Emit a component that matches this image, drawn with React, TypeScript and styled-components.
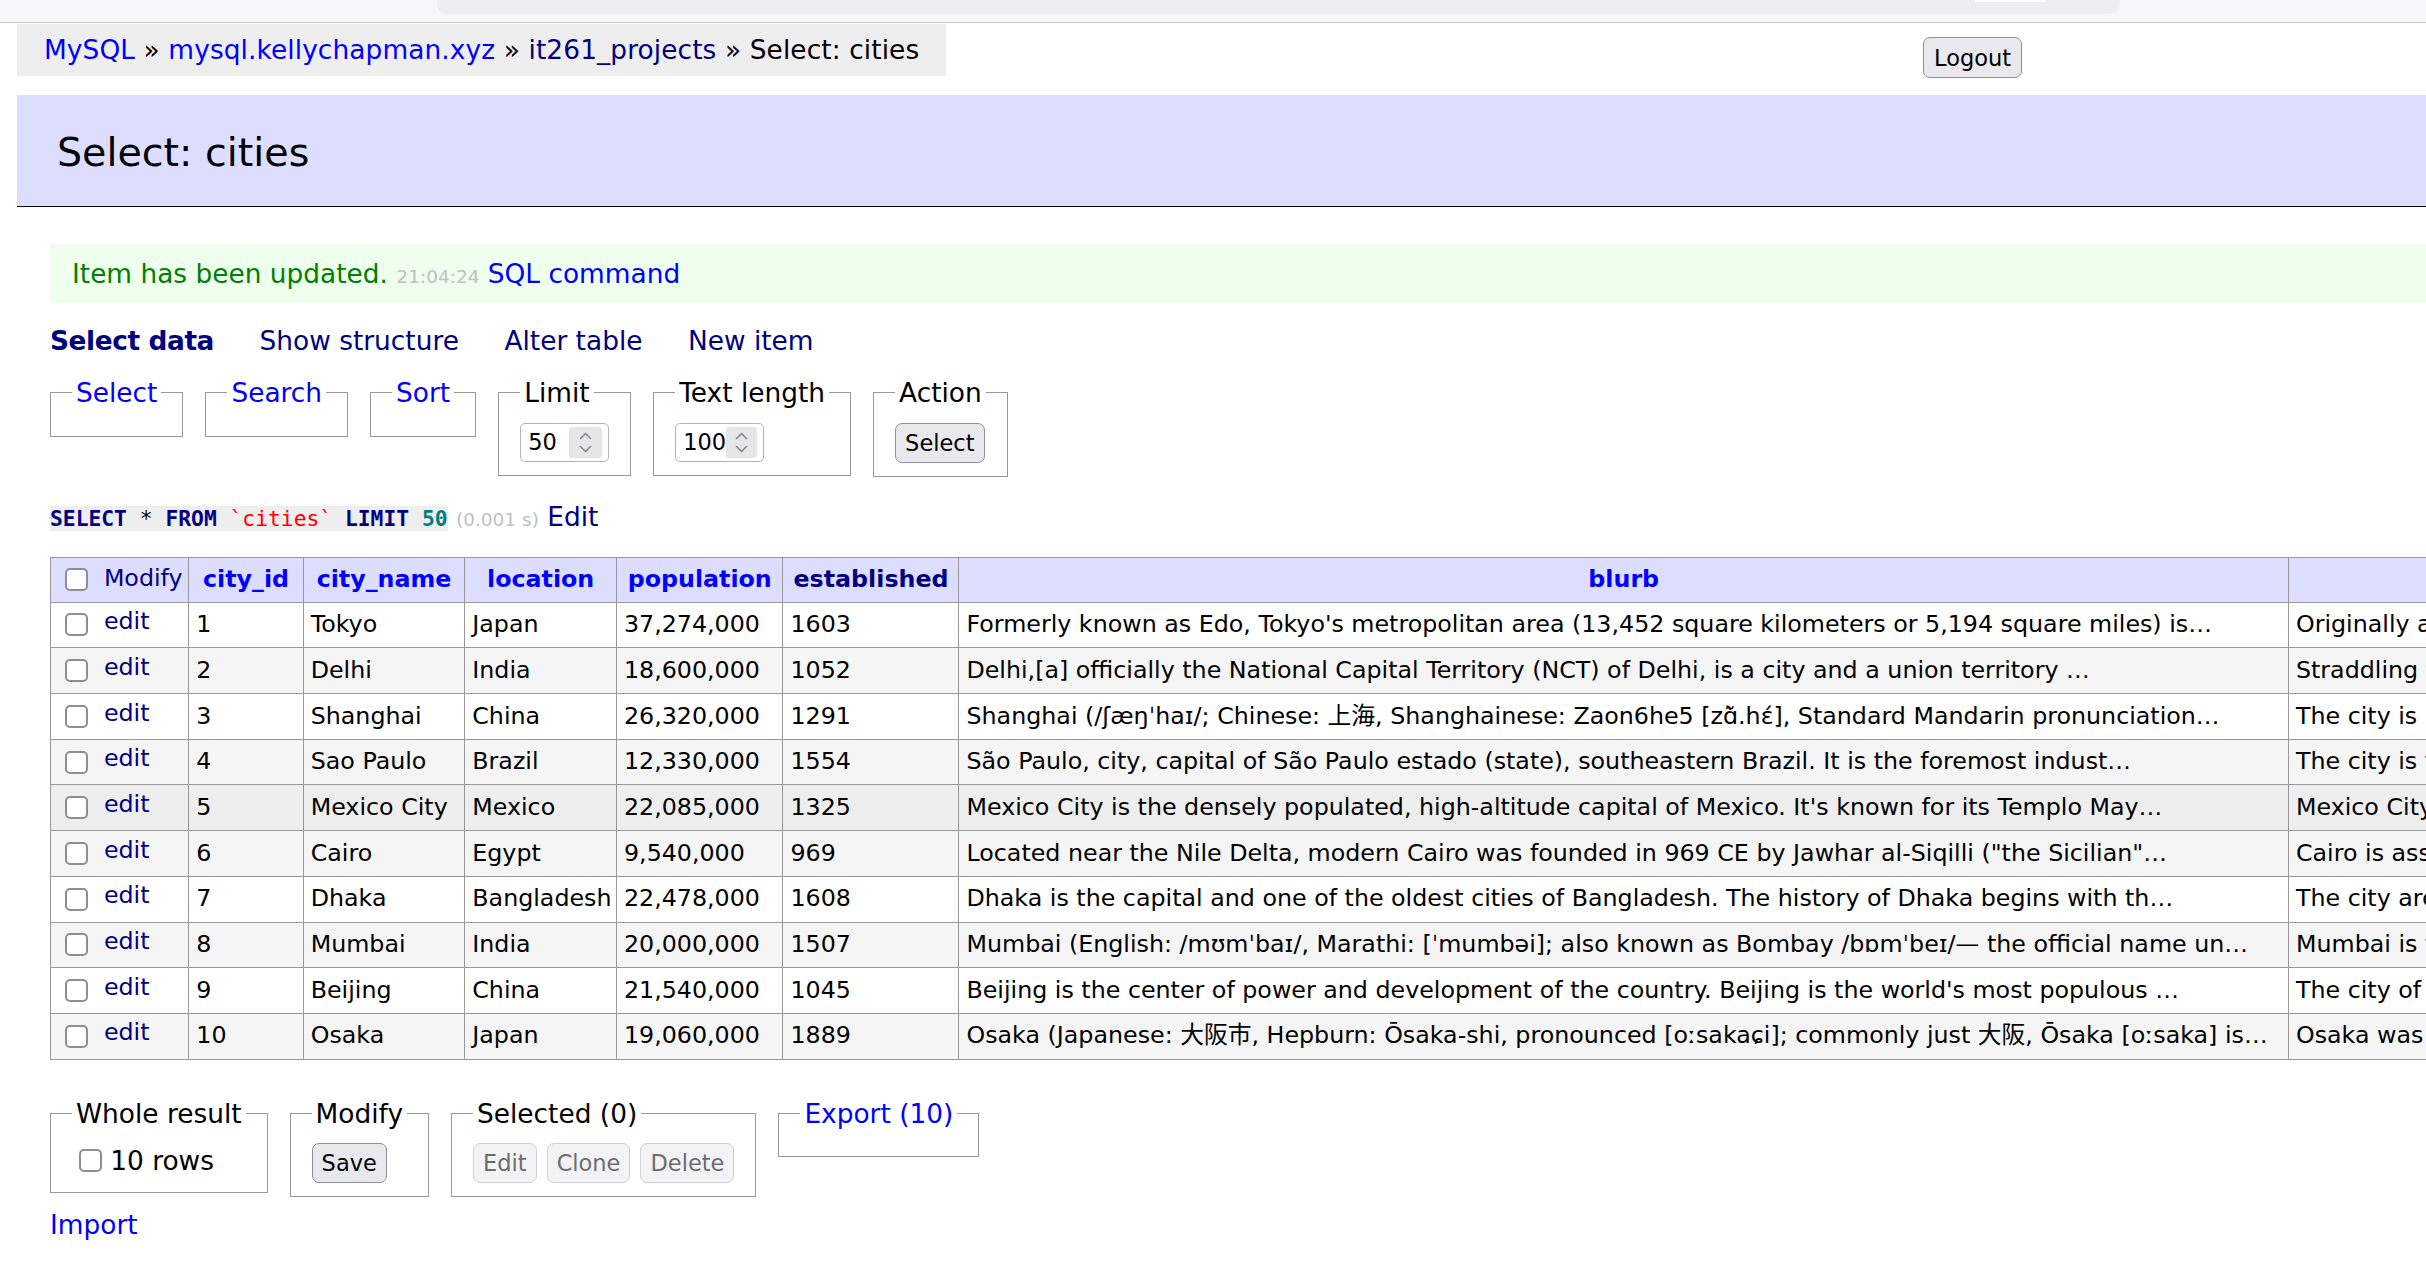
import React from "react";
import styled, { createGlobalStyle } from "styled-components";

const BLUE = "#0000ff";
const NAVY = "#000080";
const FONT = `"DejaVu Sans", Verdana, "Noto Sans CJK JP", sans-serif`;

const GlobalStyle = createGlobalStyle`
  html, body { margin: 0; padding: 0; overflow: hidden; background: #fff; }
  body {
    font-family: ${FONT};
    font-size: 26.4px;
    line-height: 1.25;
    color: #000;
  }
  #root { width: max-content; }
`;

const Page = styled.div`
  position: relative;
  width: max-content;
  padding-bottom: 40px;
`;

const TopChrome = styled.div`
  height: 22px;
  background: #f7f7f9;
  border-bottom: 1px solid #c9c9cb;
  padding-left: 437px;
`;

const AddressBar = styled.div`
  width: 1683px;
  height: 14px;
  box-sizing: border-box;
  padding-left: 1538px;
  background: #eeeef2;
  border-radius: 0 0 10px 10px;
`;

const Notch = styled.div`
  width: 70px;
  height: 2px;
  background: #fff;
`;

const Breadcrumb = styled.div`
  margin: 1px 0 0 17px;
  width: fit-content;
  height: 52px;
  line-height: 52px;
  padding: 0 27px;
  background: #eee;
  white-space: nowrap;
  letter-spacing: 0.1px;
`;

const Link = styled.a<{ $visited?: boolean; $bold?: boolean }>`
  color: ${(p) => (p.$visited ? NAVY : BLUE)};
  font-weight: ${(p) => (p.$bold ? "bold" : "inherit")};
  letter-spacing: ${(p) => (p.$bold ? "-0.4px" : "inherit")};
  text-decoration: none;
  cursor: pointer;
`;

const Button = styled.button`
  font-family: ${FONT};
  font-size: 22.5px;
  height: 40px;
  padding: 0 9px;
  margin: 0;
  border: 1px solid #8f8f9d;
  border-radius: 7px;
  background: #e9e9ed;
  color: #000;
  &:disabled {
    color: #6d6d6d;
    background: #f3f3f5;
    border-color: #cfcfd5;
  }
`;

const LogoutButton = styled(Button)`
  position: absolute;
  top: 37px;
  left: 1923px;
  height: 41px;
  padding: 0 10px;
`;

const Title = styled.h2`
  margin: 19px 0 0 17px;
  padding: 33px 40px 28px;
  font-size: 39.6px;
  line-height: 49.5px;
  font-weight: normal;
  background: #ddf;
  border-bottom: 1px solid #000;
`;

const Content = styled.div`
  margin-left: 50px;
`;

const Message = styled.div`
  margin-top: 37px;
  padding: 13px 22px;
  line-height: 33px;
  color: #008000;
  background: #efe;
  white-space: nowrap;
`;

const Time = styled.span`
  color: silver;
  font-size: 18.5px;
  line-height: 1;
`;

const Tabs = styled.div`
  margin-top: 21.35px;
  display: flex;
  gap: 45.5px;
  line-height: 33px;
  white-space: nowrap;
`;

const FieldRow = styled.div<{ $top: number }>`
  margin-top: ${(p) => p.$top}px;
  display: flex;
  align-items: flex-start;
  gap: 22px;
`;

const Fieldset = styled.fieldset`
  margin: 0;
  padding: 13.2px 21px;
  border: 1px solid #999;
  min-width: 0;
  display: flex;
  align-items: center;
  gap: 10px;
`;

const Legend = styled.legend<{ $link?: boolean }>`
  padding: 0 4px;
  line-height: 33px;
  color: ${(p) => (p.$link ? BLUE : "#000")};
  white-space: nowrap;
`;

const NumberField = styled.div`
  display: flex;
  align-items: center;
  width: 89px;
  height: 39px;
  box-sizing: border-box;
  border: 1px solid #b4b4b8;
  border-radius: 5px;
  padding: 0 6px 0 7px;
  background: #fff;
  font-size: 22.5px;
`;

const NumberValue = styled.span`
  flex: 1;
`;

const Spinner = styled.span`
  width: 33px;
  height: 31px;
  border-radius: 3px;
  background: #e6e6e8;
  display: flex;
  flex-direction: column;
  align-items: center;
  justify-content: space-evenly;
`;

const SqlLine = styled.div`
  margin-top: 23.6px;
  line-height: 33px;
  white-space: nowrap;
`;

const Code = styled.code`
  background: #eee;
  font-family: "DejaVu Sans Mono", monospace;
  font-size: 21.3px;
  line-height: 1;
`;

const Tok = styled.span<{ $kind: "kw" | "op" | "id" | "num" }>`
  color: ${(p) =>
    p.$kind === "kw" ? NAVY : p.$kind === "id" ? "#ff0000" : p.$kind === "num" ? "#007f7f" : "#000"};
  font-weight: ${(p) => (p.$kind === "kw" || p.$kind === "num" ? "bold" : "normal")};
`;

const Table = styled.table`
  margin-top: 23.35px;
  border-collapse: collapse;
  table-layout: fixed;
  width: 3538px;
  font-size: 23.76px;
  line-height: 29.7px;
`;

const Col = styled.col<{ $w: number }>`
  width: ${(p) => p.$w}px;
`;

const HeadCell = styled.th`
  border: 1px solid #999;
  padding: 7.15px 10px;
  background: #ddf;
  text-align: center;
  white-space: nowrap;
  overflow: hidden;
  font-weight: bold;
`;

const HeadCheckCell = styled.td`
  border: 1px solid #999;
  padding: 7.15px 4px 7.15px 7px;
  background: #ddf;
  text-align: left;
  white-space: nowrap;
  overflow: hidden;
`;

const Row = styled.tr<{ $even: boolean; $hover?: boolean }>`
  background: ${(p) => (p.$hover ? "#eee" : p.$even ? "#f5f5f5" : "#fff")};
`;

const Cell = styled.td`
  border: 1px solid #999;
  padding: 7.5px 7px;
  white-space: pre;
  overflow: hidden;
`;

const CheckLine = styled.div`
  display: flex;
  align-items: center;
  height: 29.7px;
`;

const CheckBox = styled.span<{ $gap: number }>`
  display: inline-block;
  flex: none;
  box-sizing: border-box;
  width: 23px;
  height: 23px;
  margin: 0 ${(p) => p.$gap}px 0 7.2px;
  border: 2.5px solid #8d8d94;
  border-radius: 5px;
  background: #fff;
`;

const RaisedLink = styled(Link)<{ $raise: number }>`
  margin-bottom: ${(p) => p.$raise * 2}px;
`;

const CheckLabel = styled.label`
  display: flex;
  align-items: center;
  height: 36px;
  line-height: 36px;
  white-space: nowrap;
`;

const ImportLine = styled.div`
  margin-top: 11px;
  line-height: 33px;
`;

const Chevron = ({ up }: { up?: boolean }) => (
  <svg width="13" height="8" viewBox="0 0 13 8">
    <path
      d={up ? "M1.5 6.5 L6.5 1.5 L11.5 6.5" : "M1.5 1.5 L6.5 6.5 L11.5 1.5"}
      fill="none"
      stroke="#8a8a8e"
      strokeWidth="1.6"
      strokeLinecap="round"
      strokeLinejoin="round"
    />
  </svg>
);

const NumberInput = ({ value }: { value: string }) => (
  <NumberField>
    <NumberValue>{value}</NumberValue>
    <Spinner>
      <Chevron up />
      <Chevron />
    </Spinner>
  </NumberField>
);

type CityRow = {
  id: number;
  name: string;
  loc: string;
  pop: string;
  est: string;
  blurb: string;
  more: string;
};

const rows: CityRow[] = [
  {
    id: 1,
    name: "Tokyo",
    loc: "Japan",
    pop: "37,274,000",
    est: "1603",
    blurb:
      "Formerly known as Edo, Tokyo's metropolitan area (13,452 square kilometers or 5,194 square miles) is…",
    more: "Originally a fishing village named Edo, the city became politically prominent in 1603…",
  },
  {
    id: 2,
    name: "Delhi",
    loc: "India",
    pop: "18,600,000",
    est: "1052",
    blurb:
      "Delhi,[a] officially the National Capital Territory (NCT) of Delhi, is a city and a union territory …",
    more: "Straddling the Yamuna river, Delhi has been continuously inhabited…",
  },
  {
    id: 3,
    name: "Shanghai",
    loc: "China",
    pop: "26,320,000",
    est: "1291",
    blurb:
      "Shanghai (/ʃæŋˈhaɪ/; Chinese: 上海, Shanghainese: Zaon6he5 [zɑ̃̀.hɛ́], Standard Mandarin pronunciation…",
    more: "The city is located on the Yangtze River Delta…",
  },
  {
    id: 4,
    name: "Sao Paulo",
    loc: "Brazil",
    pop: "12,330,000",
    est: "1554",
    blurb:
      "São Paulo, city, capital of São Paulo estado (state), southeastern Brazil. It is the foremost indust…",
    more: "The city is the most populous in the Americas…",
  },
  {
    id: 5,
    name: "Mexico City",
    loc: "Mexico",
    pop: "22,085,000",
    est: "1325",
    blurb:
      "Mexico City is the densely populated, high-altitude capital of Mexico. It's known for its Templo May…",
    more: "Mexico City was built on the ruins of Tenochtitlan…",
  },
  {
    id: 6,
    name: "Cairo",
    loc: "Egypt",
    pop: "9,540,000",
    est: "969",
    blurb:
      "Located near the Nile Delta, modern Cairo was founded in 969 CE by Jawhar al-Siqilli (\"the Sicilian\"…",
    more: "Cairo is associated with ancient Egypt…",
  },
  {
    id: 7,
    name: "Dhaka",
    loc: "Bangladesh",
    pop: "22,478,000",
    est: "1608",
    blurb:
      "Dhaka is the capital and one of the oldest cities of Bangladesh. The history of Dhaka begins with th…",
    more: "The city area was known as Bengal…",
  },
  {
    id: 8,
    name: "Mumbai",
    loc: "India",
    pop: "20,000,000",
    est: "1507",
    blurb:
      "Mumbai (English: /mʊmˈbaɪ/, Marathi: [ˈmumbəi]; also known as Bombay /bɒmˈbeɪ/— the official name un…",
    more: "Mumbai is the financial capital of India…",
  },
  {
    id: 9,
    name: "Beijing",
    loc: "China",
    pop: "21,540,000",
    est: "1045",
    blurb:
      "Beijing is the center of power and development of the country. Beijing is the world's most populous …",
    more: "The city of Beijing has a history of over 3,000 years…",
  },
  {
    id: 10,
    name: "Osaka",
    loc: "Japan",
    pop: "19,060,000",
    est: "1889",
    blurb:
      "Osaka (Japanese: 大阪市, Hepburn: Ōsaka-shi, pronounced [oːsakaɕi]; commonly just 大阪, Ōsaka [oːsaka] is…",
    more: "Osaka was historically the commercial capital of Japan…",
  },
];

const colWidths = [138.3, 114.4, 161.6, 151.7, 166.5, 176, 1329.5, 1300];

const headers: { label: string; visited?: boolean }[] = [
  { label: "city_id" },
  { label: "city_name" },
  { label: "location" },
  { label: "population" },
  { label: "established", visited: true },
  { label: "blurb" },
  { label: "history" },
];

export default function App() {
  return (
    <Page>
      <GlobalStyle />
      <TopChrome>
        <AddressBar>
          <Notch />
        </AddressBar>
      </TopChrome>

      <Breadcrumb>
        <Link>MySQL</Link> » <Link>mysql.kellychapman.xyz</Link> »{" "}
        <Link $visited>it261_projects</Link> » Select: cities
      </Breadcrumb>
      <LogoutButton>Logout</LogoutButton>

      <Title>Select: cities</Title>

      <Content>
        <Message>
          Item has been updated. <Time>21:04:24</Time> <Link>SQL command</Link>
        </Message>

        <Tabs>
          <Link $visited $bold>
            Select data
          </Link>
          <Link $visited>Show structure</Link>
          <Link $visited>Alter table</Link>
          <Link $visited>New item</Link>
        </Tabs>

        <FieldRow $top={19.5}>
          <Fieldset>
            <Legend $link>Select</Legend>
          </Fieldset>
          <Fieldset>
            <Legend $link>Search</Legend>
          </Fieldset>
          <Fieldset>
            <Legend $link>Sort</Legend>
          </Fieldset>
          <Fieldset>
            <Legend>Limit</Legend>
            <NumberInput value="50" />
          </Fieldset>
          <Fieldset>
            <Legend>Text length</Legend>
            <NumberInput value="100" />
          </Fieldset>
          <Fieldset>
            <Legend>Action</Legend>
            <Button>Select</Button>
          </Fieldset>
        </FieldRow>

        <SqlLine>
          <Code>
            <Tok $kind="kw">SELECT</Tok> <Tok $kind="op">*</Tok> <Tok $kind="kw">FROM</Tok>{" "}
            <Tok $kind="id">`cities`</Tok> <Tok $kind="kw">LIMIT</Tok> <Tok $kind="num">50</Tok>
          </Code>{" "}
          <Time>(0.001 s)</Time> <Link $visited>Edit</Link>
        </SqlLine>

        <Table>
          <colgroup>
            {colWidths.map((w, i) => (
              <Col key={i} $w={w} />
            ))}
          </colgroup>
          <thead>
            <tr>
              <HeadCheckCell>
                <CheckLine>
                  <CheckBox $gap={15.7} />
                  <RaisedLink $visited $raise={1}>
                    Modify
                  </RaisedLink>
                </CheckLine>
              </HeadCheckCell>
              {headers.map((h) => (
                <HeadCell key={h.label}>
                  <Link $visited={h.visited}>{h.label}</Link>
                </HeadCell>
              ))}
            </tr>
          </thead>
          <tbody>
            {rows.map((r, i) => (
              <Row key={r.id} $even={i % 2 === 1} $hover={r.id === 5}>
                <Cell>
                  <CheckLine>
                    <CheckBox $gap={15.7} />
                    <RaisedLink $visited $raise={3}>
                      edit
                    </RaisedLink>
                  </CheckLine>
                </Cell>
                <Cell>{r.id}</Cell>
                <Cell>{r.name}</Cell>
                <Cell>{r.loc}</Cell>
                <Cell>{r.pop}</Cell>
                <Cell>{r.est}</Cell>
                <Cell>{r.blurb}</Cell>
                <Cell>{r.more}</Cell>
              </Row>
            ))}
          </tbody>
        </Table>

        <FieldRow $top={37}>
          <Fieldset>
            <Legend>Whole result</Legend>
            <CheckLabel>
              <CheckBox $gap={8} />
              10 rows
            </CheckLabel>
          </Fieldset>
          <Fieldset>
            <Legend>Modify</Legend>
            <Button>Save</Button>
          </Fieldset>
          <Fieldset>
            <Legend>Selected (0)</Legend>
            <Button disabled>Edit</Button>
            <Button disabled>Clone</Button>
            <Button disabled>Delete</Button>
          </Fieldset>
          <Fieldset>
            <Legend $link>Export (10)</Legend>
          </Fieldset>
        </FieldRow>

        <ImportLine>
          <Link>Import</Link>
        </ImportLine>
      </Content>
    </Page>
  );
}
